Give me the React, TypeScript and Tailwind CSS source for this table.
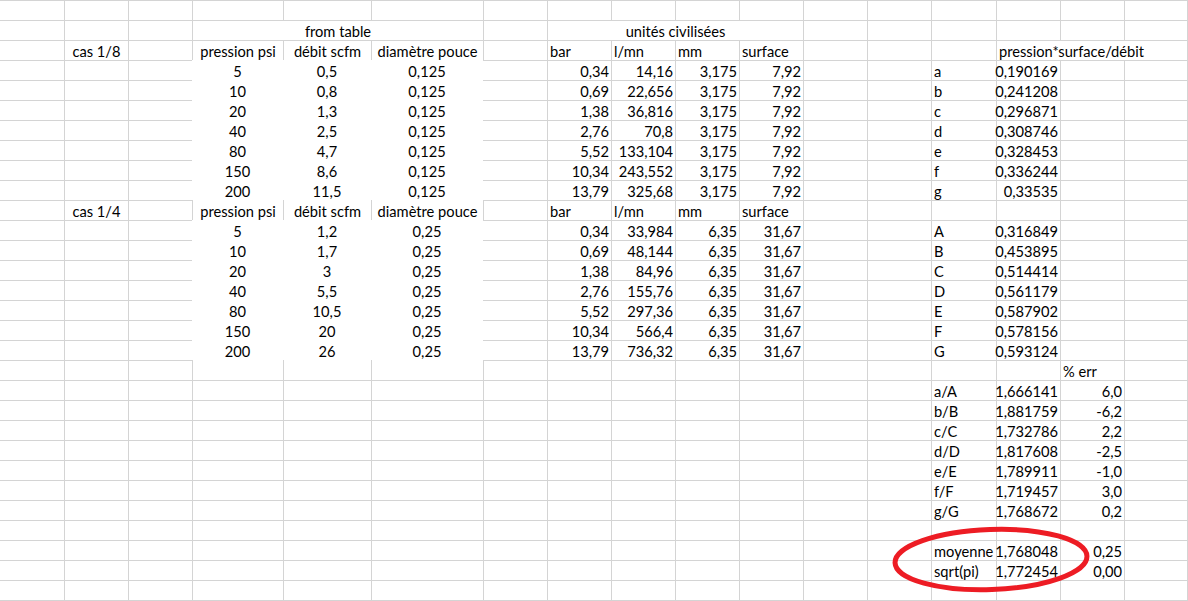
import React from 'react';

type Align = 'l' | 'c' | 'r';
interface Cell {
  t: string;
  a: Align;
}

const ROWS = 30;
const NCOLS = 17;

const D = 3, E = 4, F = 5, H = 7, I = 8, J = 9, K = 10, B = 1, N = 13, O = 14, P = 15;

const sheet: Record<string, Cell> = {};
const put = (row: number, col: number, t: string, a: Align) => {
  sheet[`${row}:${col}`] = { t, a };
};

// headers
const headers = (row: number, label: string) => {
  put(row, B, label, 'c');
  put(row, D, 'pression psi', 'c');
  put(row, E, 'débit scfm', 'c');
  put(row, F, 'diamètre pouce', 'c');
  put(row, H, 'bar', 'l');
  put(row, I, 'l/mn', 'l');
  put(row, J, 'mm', 'l');
  put(row, K, 'surface', 'l');
};
headers(3, 'cas 1/8');
headers(11, 'cas 1/4');
put(3, O, 'pression*surface/débit', 'l');

const psi = ['5', '10', '20', '40', '80', '150', '200'];
const bar = ['0,34', '0,69', '1,38', '2,76', '5,52', '10,34', '13,79'];

const small = {
  debit: ['0,5', '0,8', '1,3', '2,5', '4,7', '8,6', '11,5'],
  lmn: ['14,16', '22,656', '36,816', '70,8', '133,104', '243,552', '325,68'],
  ratio: ['0,190169', '0,241208', '0,296871', '0,308746', '0,328453', '0,336244', '0,33535'],
  letters: ['a', 'b', 'c', 'd', 'e', 'f', 'g'],
};
const big = {
  debit: ['1,2', '1,7', '3', '5,5', '10,5', '20', '26'],
  lmn: ['33,984', '48,144', '84,96', '155,76', '297,36', '566,4', '736,32'],
  ratio: ['0,316849', '0,453895', '0,514414', '0,561179', '0,587902', '0,578156', '0,593124'],
  letters: ['A', 'B', 'C', 'D', 'E', 'F', 'G'],
};

psi.forEach((p, i) => {
  const r1 = 4 + i;
  put(r1, D, p, 'c');
  put(r1, E, small.debit[i], 'c');
  put(r1, F, '0,125', 'c');
  put(r1, H, bar[i], 'r');
  put(r1, I, small.lmn[i], 'r');
  put(r1, J, '3,175', 'r');
  put(r1, K, '7,92', 'r');
  put(r1, N, small.letters[i], 'l');
  put(r1, O, small.ratio[i], 'r');

  const r2 = 12 + i;
  put(r2, D, p, 'c');
  put(r2, E, big.debit[i], 'c');
  put(r2, F, '0,25', 'c');
  put(r2, H, bar[i], 'r');
  put(r2, I, big.lmn[i], 'r');
  put(r2, J, '6,35', 'r');
  put(r2, K, '31,67', 'r');
  put(r2, N, big.letters[i], 'l');
  put(r2, O, big.ratio[i], 'r');
});

put(19, P, '% err', 'l');
const quot = ['1,666141', '1,881759', '1,732786', '1,817608', '1,789911', '1,719457', '1,768672'];
const err = ['6,0', '-6,2', '2,2', '-2,5', '-1,0', '3,0', '0,2'];
quot.forEach((q, i) => {
  put(20 + i, N, `${small.letters[i]}/${big.letters[i]}`, 'l');
  put(20 + i, O, q, 'r');
  put(20 + i, P, err[i], 'r');
});
put(28, N, 'moyenne', 'l');
put(28, O, '1,768048', 'r');
put(28, P, '0,25', 'r');
put(29, N, 'sqrt(pi)', 'l');
put(29, O, '1,772454', 'r');
put(29, P, '0,00', 'r');

// white-filled data blocks hide the gridlines
const filled = (row: number, col: number) =>
  col >= D && col <= F && ((row >= 4 && row <= 10) || (row >= 12 && row <= 18));

// text overflow from O3 into P3, Q3
const noLeft = (row: number, col: number) => row === 3 && (col === 15 || col === 16);

const alignClass: Record<Align, string> = {
  l: 'justify-start',
  c: 'justify-center',
  r: 'justify-end',
};

function SheetCell({ row, col }: { row: number; col: number }) {
  const cell = sheet[`${row}:${col}`];
  const top = !(filled(row, col) || filled(row - 1, col));
  const left = col > 0 && !(filled(row, col) || filled(row, col - 1)) && !noLeft(row, col);
  const last = row === ROWS;

  return (
    <div
      className={[
        'flex items-end whitespace-nowrap px-[2px] leading-[17px] border-[#d4d4d4]',
        top ? 'border-t' : 'pt-[1px]',
        left ? 'border-l' : '',
        col === NCOLS - 1 ? 'border-r' : '',
        last ? 'border-b h-[21px]' : 'h-[20px]',
        cell ? alignClass[cell.a] : '',
      ].join(' ')}
    >
      {cell?.t}
    </div>
  );
}

function Row({ row }: { row: number }) {
  const cells: React.ReactNode[] = [];
  for (let col = 0; col < NCOLS; col++) {
    // merged titles on row 2
    if (row === 2 && col === D) {
      cells.push(
        <div key={col} className="col-span-3 flex h-[20px] items-end justify-center border-t border-l border-[#d4d4d4] leading-[17px]">
          from table
        </div>
      );
      col += 2;
      continue;
    }
    if (row === 2 && col === H) {
      cells.push(
        <div key={col} className="col-span-4 flex h-[20px] items-end justify-center border-t border-l border-[#d4d4d4] leading-[17px]">
          unités civilisées
        </div>
      );
      col += 3;
      continue;
    }
    cells.push(<SheetCell key={col} row={row} col={col} />);
  }
  return <>{cells}</>;
}

export default function App() {
  const rows = Array.from({ length: ROWS }, (_, i) => i + 1);

  return (
    <div
      className="relative h-[601px] w-[1188px] overflow-hidden bg-white text-[14.67px] text-black"
      style={{ fontFamily: 'Lato, "Noto Sans", sans-serif' }}
    >
      <div className="grid grid-cols-[64px_64px_64px_91px_88px_112px_64px_64px_64px_64px_64px_64px_64px_65px_64px_64px_64px]">
        {rows.map(r => (
          <Row key={r} row={r} />
        ))}
      </div>

      {/* red circle drawn over the result */}
      <svg className="pointer-events-none absolute left-0 top-0" width="1188" height="601">
        <ellipse
          cx="991"
          cy="559.5"
          rx="96"
          ry="30"
          fill="none"
          stroke="#ed1c24"
          strokeWidth="5"
          transform="rotate(-2 991 559.5)"
        />
      </svg>
    </div>
  );
}
